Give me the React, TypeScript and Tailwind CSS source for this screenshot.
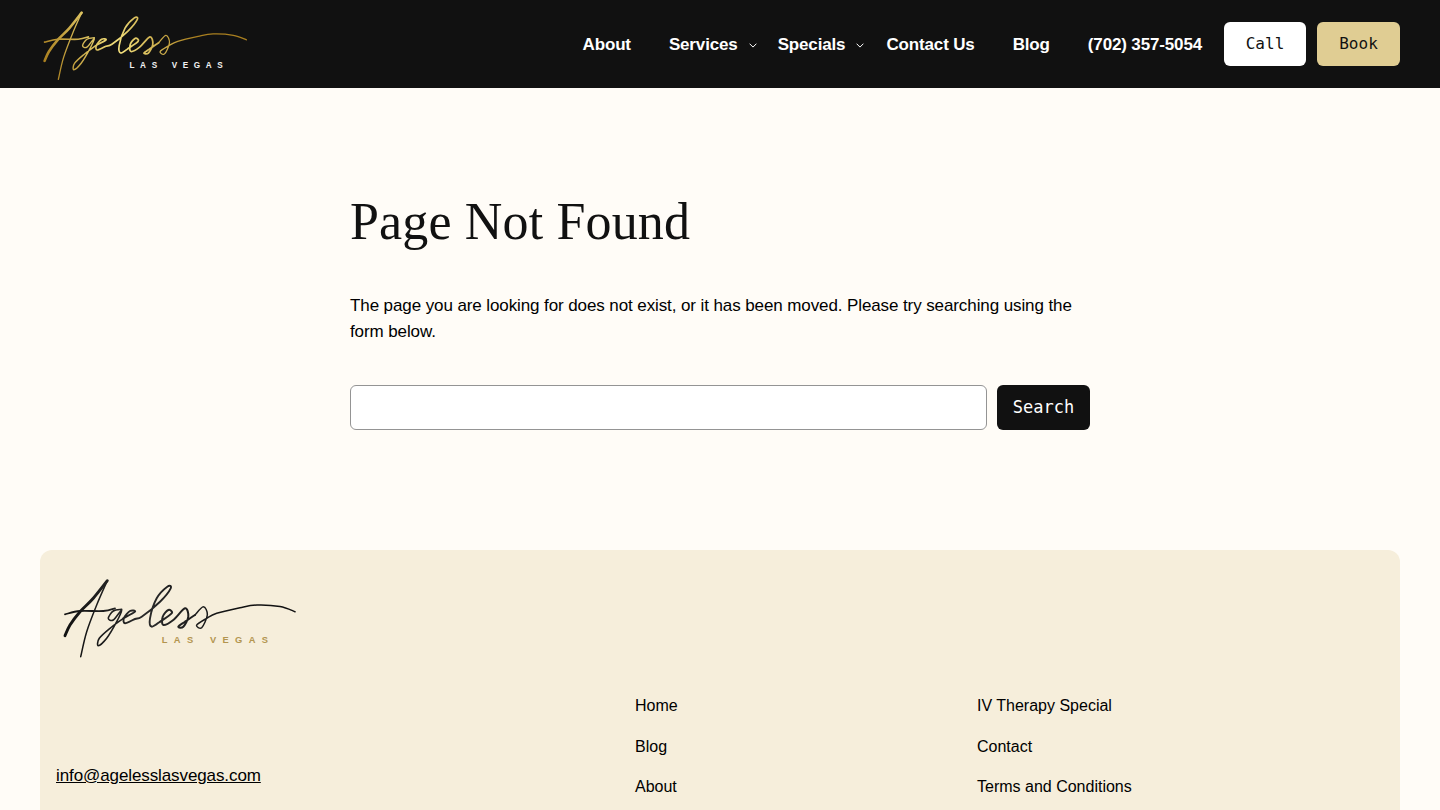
const sans = "font-['Liberation_Sans',Arial,sans-serif]";
const mono = "font-['DejaVu_Sans_Mono',monospace]";

// catmull-rom through hand-traced points, so the script strokes stay smooth
function smooth(pts: number[][]) {
  let d = `M${pts[0][0]} ${pts[0][1]}`;
  for (let i = 0; i < pts.length - 1; i++) {
    const p0 = pts[Math.max(i - 1, 0)];
    const p1 = pts[i];
    const p2 = pts[i + 1];
    const p3 = pts[Math.min(i + 2, pts.length - 1)];
    const c1x = p1[0] + (p2[0] - p0[0]) / 6;
    const c1y = p1[1] + (p2[1] - p0[1]) / 6;
    const c2x = p2[0] - (p3[0] - p1[0]) / 6;
    const c2y = p2[1] - (p3[1] - p1[1]) / 6;
    d += `C${c1x.toFixed(1)} ${c1y.toFixed(1)} ${c2x.toFixed(1)} ${c2y.toFixed(1)} ${p2[0]} ${p2[1]}`;
  }
  return d;
}

const strokes: { pts: number[][]; w: number }[] = [
  { pts: [[107.3, 580.7], [93.3, 598.3], [80, 611.7], [70, 625], [65, 635.7]], w: 2.9 },
  { pts: [[107.3, 580.7], [96.7, 605], [86.7, 631.7], [80.7, 656.7]], w: 1.5 },
  { pts: [[65, 614.3], [80, 611], [103.3, 611], [115, 608.3]], w: 1.8 },
  { pts: [[121.7, 609.3], [113.3, 611], [108.3, 618.3], [113.3, 620], [121.7, 610], [116.7, 621.7], [106.7, 638.3], [98.3, 645.7], [99.3, 638.3], [110, 628.3], [123.3, 618.3]], w: 1.6 },
  { pts: [[123.3, 618.3], [135, 611.7], [130, 611], [124, 618], [125, 623.3], [135, 619], [141.7, 616.7], [160, 601.7], [170.7, 588.3], [167.3, 586.7], [156.7, 598.3], [150, 618.3], [151.7, 626.7], [160, 621.7]], w: 1.9 },
  { pts: [[160, 621.7], [171.7, 613.3], [168.3, 610], [162.7, 616.7], [163.3, 625], [173.3, 620], [185, 608.3], [188.3, 616.7], [183.3, 626.7], [178.3, 626.7], [185, 621.7], [195, 615]], w: 2 },
  { pts: [[195, 615], [203.3, 606.7], [207.3, 615], [201.7, 627.7], [196.7, 625], [206.7, 618.3], [216.7, 613.3], [240, 607.7], [257, 605], [280, 606.5], [295, 611.7]], w: 1.5 },
];

function Logo({ id, width, height, ink, inkEnd, textColor }: { id: string; width: number; height: number; ink: string; inkEnd: string; textColor: string }) {
  return (
    <svg width={width} height={height} viewBox="60 572 240 90" fill="none" strokeLinecap="round" strokeLinejoin="round" className="block shrink-0">
      <defs>
        <linearGradient id={id} gradientUnits="userSpaceOnUse" x1="70" y1="650" x2="230" y2="590">
          <stop offset="0" stopColor={ink} />
          <stop offset="0.5" stopColor={inkEnd} />
          <stop offset="1" stopColor={ink} />
        </linearGradient>
      </defs>
      {strokes.map((s, i) => (
        <path key={i} d={smooth(s.pts)} stroke={`url(#${id})`} strokeWidth={s.w} />
      ))}
      <text x="161.7" y="643.4" fill={textColor} fontFamily="'Liberation Sans',Arial,sans-serif" fontSize="9.3" fontWeight="700" letterSpacing="6.5">LAS</text>
      <text x="210" y="643.4" fill={textColor} fontFamily="'Liberation Sans',Arial,sans-serif" fontSize="9.3" fontWeight="700" letterSpacing="6.35">VEGAS</text>
    </svg>
  );
}

function Chevron() {
  return (
    <svg width="8" height="5" viewBox="0 0 8 5" fill="none" className="block text-white">
      <path d="M.6.7 4 4.1 7.4.7" stroke="currentColor" strokeWidth="1" />
    </svg>
  );
}

function NavLink({ label, caret }: { label: string; caret?: boolean }) {
  return (
    <a className="flex items-center text-[17px] leading-none font-bold tracking-[-0.15px] text-white">
      <span>{label}</span>
      {caret && (
        <span className="mt-[2px] ml-[11px]">
          <Chevron />
        </span>
      )}
    </a>
  );
}

function FooterColumn({ links }: { links: string[] }) {
  return (
    <ul className="flex flex-col gap-[14.5px] text-[16px] leading-[26px] text-black">
      {links.map((link) => (
        <li key={link}>{link}</li>
      ))}
    </ul>
  );
}

export default function App() {
  return (
    <div className={`h-[810px] overflow-hidden bg-[#fffcf7] ${sans}`}>
      <header className="flex h-[88px] items-center justify-between bg-[#111111] px-10">
        <Logo id="logo-gold" width={211} height={79} ink="#a97f1f" inkEnd="#f2df7c" textColor="#f2f2f2" />
        <div className="flex items-center">
          <nav className="flex items-center">
            <div className="mr-[38px]"><NavLink label="About" /></div>
            <div className="mr-[21px]"><NavLink label="Services" caret /></div>
            <div className="mr-[22px]"><NavLink label="Specials" caret /></div>
            <div className="mr-[38px]"><NavLink label="Contact Us" /></div>
            <div className="mr-[38px]"><NavLink label="Blog" /></div>
            <NavLink label="(702) 357-5054" />
          </nav>
          <a className={`ml-[22px] flex h-[44px] w-[82px] items-center justify-center rounded-[6px] bg-white text-[16px] text-[#111111] ${mono}`}>Call</a>
          <a className={`ml-[11px] flex h-[44px] w-[83px] items-center justify-center rounded-[6px] bg-[#e0cd93] text-[16px] text-[#111111] ${mono}`}>Book</a>
        </div>
      </header>

      <main className="mx-auto w-[740px] pt-[104px]">
        <h1 className="font-['Liberation_Serif','Times_New_Roman',serif] text-[52px] leading-[60px] font-normal tracking-[0.15px] text-[#111111]">Page Not Found</h1>
        <p className="mt-[41px] text-[17px] leading-[26px] tracking-[-0.1px] text-black">
          The page you are looking for does not exist, or it has been moved. Please try searching using the form below.
        </p>
        <form className="mt-[40px] flex gap-[10px]">
          <input className="h-[45px] min-w-0 flex-1 rounded-[6px] border border-[#949494] bg-white" aria-label="Search" />
          <button type="button" className={`h-[45px] w-[93px] rounded-[6px] bg-[#111111] text-[17px] text-white ${mono}`}>Search</button>
        </form>
      </main>

      <footer className="mx-10 mt-[120px] h-[400px] rounded-t-[12px] bg-[#f6eedb] px-4 pt-[22px]">
        <div className="pl-[4px]">
          <Logo id="logo-ink" width={240} height={90} ink="#111111" inkEnd="#2a2a2a" textColor="#b3954f" />
        </div>
        <div className="mt-[31px] grid grid-cols-[579px_342px_1fr]">
          <div className="pt-[70px]">
            <a className="text-[17px] leading-[26px] tracking-[-0.1px] text-black underline">info@agelesslasvegas.com</a>
          </div>
          <FooterColumn links={["Home", "Blog", "About"]} />
          <FooterColumn links={["IV Therapy Special", "Contact", "Terms and Conditions"]} />
        </div>
      </footer>
    </div>
  );
}
